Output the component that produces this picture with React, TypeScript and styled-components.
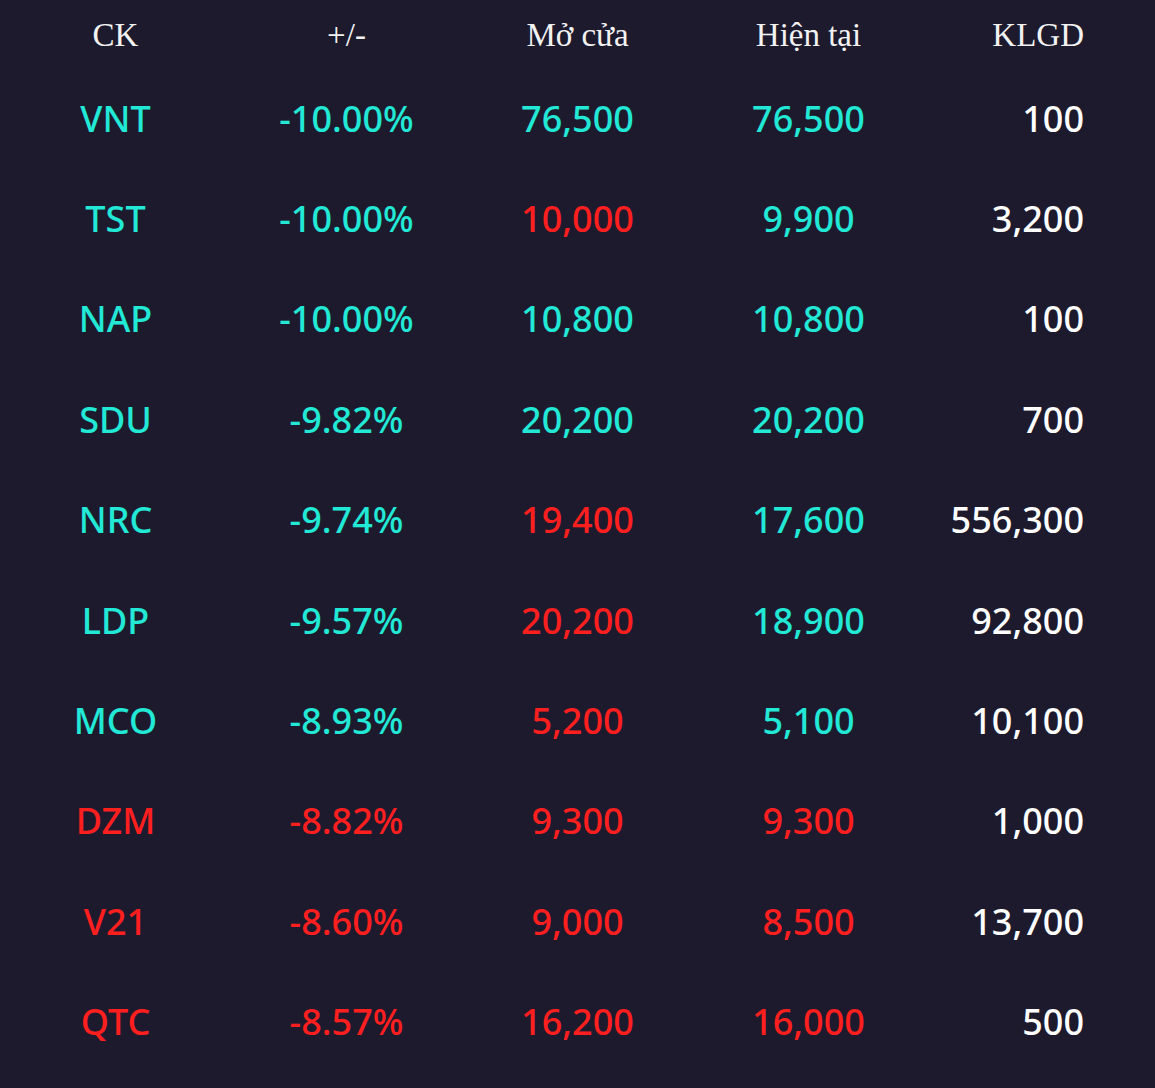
import React from "react";
import styled, { createGlobalStyle } from "styled-components";

const Global = createGlobalStyle`
  html, body { margin: 0; padding: 0; background: #1d1a2e; }
  #root { min-height: 1088px; background: #1d1a2e; }
`;

type Tone = "up" | "down" | "plain";

const colorOf = (t: Tone) => (t === "up" ? "#22e8d6" : t === "down" ? "#ff1f1f" : "#ffffff");

const Table = styled.div`
  display: grid;
  grid-template-columns: repeat(5, 1fr);
  width: 1155px;
  height: 1088px;
  background: #1d1a2e;
  grid-template-rows: 68px repeat(10, 100.4px);
  align-items: center;
`;

const HeadCell = styled.div<{ $right?: boolean }>`
  font-family: "Liberation Serif", "Times New Roman", serif;
  font-size: 33px;
  color: #f2f2f2;
  text-align: ${(p) => (p.$right ? "right" : "center")};
  padding-right: ${(p) => (p.$right ? "71px" : "0")};
  padding-top: 3px;
`;

const Cell = styled.div<{ $tone: Tone; $right?: boolean }>`
  font-family: "Noto Sans", "Open Sans", sans-serif;
  font-size: 36px;
  font-weight: 500;
  color: ${(p) => colorOf(p.$tone)};
  text-align: ${(p) => (p.$right ? "right" : "center")};
  padding-right: ${(p) => (p.$right ? "71px" : "0")};
`;

type Row = { ck: [string, Tone]; ch: [string, Tone]; open: [string, Tone]; cur: [string, Tone]; vol: string };

const rows: Row[] = [
  { ck: ["VNT", "up"], ch: ["-10.00%", "up"], open: ["76,500", "up"], cur: ["76,500", "up"], vol: "100" },
  { ck: ["TST", "up"], ch: ["-10.00%", "up"], open: ["10,000", "down"], cur: ["9,900", "up"], vol: "3,200" },
  { ck: ["NAP", "up"], ch: ["-10.00%", "up"], open: ["10,800", "up"], cur: ["10,800", "up"], vol: "100" },
  { ck: ["SDU", "up"], ch: ["-9.82%", "up"], open: ["20,200", "up"], cur: ["20,200", "up"], vol: "700" },
  { ck: ["NRC", "up"], ch: ["-9.74%", "up"], open: ["19,400", "down"], cur: ["17,600", "up"], vol: "556,300" },
  { ck: ["LDP", "up"], ch: ["-9.57%", "up"], open: ["20,200", "down"], cur: ["18,900", "up"], vol: "92,800" },
  { ck: ["MCO", "up"], ch: ["-8.93%", "up"], open: ["5,200", "down"], cur: ["5,100", "up"], vol: "10,100" },
  { ck: ["DZM", "down"], ch: ["-8.82%", "down"], open: ["9,300", "down"], cur: ["9,300", "down"], vol: "1,000" },
  { ck: ["V21", "down"], ch: ["-8.60%", "down"], open: ["9,000", "down"], cur: ["8,500", "down"], vol: "13,700" },
  { ck: ["QTC", "down"], ch: ["-8.57%", "down"], open: ["16,200", "down"], cur: ["16,000", "down"], vol: "500" },
];

export default function App() {
  return (
    <>
      <Global />
      <Table>
        <HeadCell>CK</HeadCell>
        <HeadCell>+/-</HeadCell>
        <HeadCell>Mở cửa</HeadCell>
        <HeadCell>Hiện tại</HeadCell>
        <HeadCell $right>KLGD</HeadCell>
        {rows.map((r) => (
          <React.Fragment key={r.ck[0]}>
            <Cell $tone={r.ck[1]}>{r.ck[0]}</Cell>
            <Cell $tone={r.ch[1]}>{r.ch[0]}</Cell>
            <Cell $tone={r.open[1]}>{r.open[0]}</Cell>
            <Cell $tone={r.cur[1]}>{r.cur[0]}</Cell>
            <Cell $tone="plain" $right>{r.vol}</Cell>
          </React.Fragment>
        ))}
      </Table>
    </>
  );
}
